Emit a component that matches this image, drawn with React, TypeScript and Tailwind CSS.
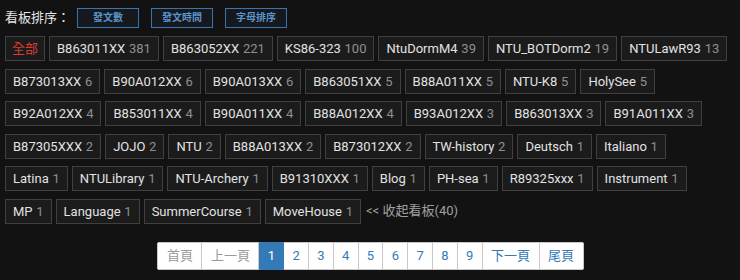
import React from 'react';

const boards: [string, number][] = [
  ['B863011XX', 381], ['B863052XX', 221], ['KS86-323', 100], ['NtuDormM4', 39], ['NTU_BOTDorm2', 19], ['NTULawR93', 13],
  ['B873013XX', 6], ['B90A012XX', 6], ['B90A013XX', 6], ['B863051XX', 5], ['B88A011XX', 5], ['NTU-K8', 5], ['HolySee', 5],
  ['B92A012XX', 4], ['B853011XX', 4], ['B90A011XX', 4], ['B88A012XX', 4], ['B93A012XX', 3], ['B863013XX', 3], ['B91A011XX', 3],
  ['B87305XXX', 2], ['JOJO', 2], ['NTU', 2], ['B88A013XX', 2], ['B873012XX', 2], ['TW-history', 2], ['Deutsch', 1], ['Italiano', 1],
  ['Latina', 1], ['NTULibrary', 1], ['NTU-Archery', 1], ['B91310XXX', 1], ['Blog', 1], ['PH-sea', 1], ['R89325xxx', 1], ['Instrument', 1],
  ['MP', 1], ['Language', 1], ['SummerCourse', 1], ['MoveHouse', 1],
];

const pages = ['1', '2', '3', '4', '5', '6', '7', '8', '9'];

export default function App() {
  return (
    <div className="w-[740px] h-[280px] bg-[#121212] pl-[5px] pr-[8px] pt-[8px] font-['Roboto','Noto_Sans_CJK_TC',sans-serif] overflow-hidden">
      <div className="flex items-center h-[20px]">
        <span className="text-[13px] text-[#e6e6e6] w-[72px]">看板排序：</span>
        <div className="flex gap-[12px]">
          {['發文數', '發文時間', '字母排序'].map((t) => (
            <button
              key={t}
              className="w-[62px] h-[20px] border border-[#3a74ad] bg-[#15191e] text-[10px] font-bold text-[#5b94cc] leading-none"
            >
              {t}
            </button>
          ))}
        </div>
      </div>

      <div className="mt-[8px] flex flex-wrap gap-x-[4px] gap-y-[7.5px] text-[13px] leading-[15px]">
        <span className="h-[25px] px-[6px] py-[4px] border border-[#404040] bg-[#1b1b1b] text-[#dc3b31]">全部</span>
        {boards.map(([name, n]) => (
          <span key={name} className="h-[25px] px-[7px] py-[4px] border border-[#404040] bg-[#1b1b1b] text-[#e2e2e2] whitespace-nowrap">
            {name} <span className="ml-[0.5px] text-[#8f8f8f]">{n}</span>
          </span>
        ))}
        <span className="h-[25px] py-[4px] pl-[1px] text-[#a0a0a0]">&lt;&lt; 收起看板(40)</span>
      </div>

      <div className="mt-[18px] flex justify-center pl-[4px]">
        <div className="flex h-[28px] text-[13px] bg-white rounded-[3px] overflow-hidden">
          <span className="px-[8.5px] flex items-center border border-[#c8c8c8] text-[#9a9a9a]">首頁</span>
          <span className="px-[8.5px] flex items-center border border-l-0 border-[#c8c8c8] text-[#9a9a9a]">上一頁</span>
          {pages.map((p) => (
            <span
              key={p}
              className={
                p === '1'
                  ? 'w-[24.8px] flex items-center justify-center border border-l-0 border-[#337ab7] bg-[#337ab7] text-white'
                  : 'w-[24.8px] flex items-center justify-center border border-l-0 border-[#c8c8c8] text-[#337ab7]'
              }
            >
              {p}
            </span>
          ))}
          <span className="px-[8.5px] flex items-center border border-l-0 border-[#c8c8c8] text-[#337ab7]">下一頁</span>
          <span className="px-[8.5px] flex items-center border border-l-0 border-[#c8c8c8] text-[#337ab7]">尾頁</span>
        </div>
      </div>
    </div>
  );
}
